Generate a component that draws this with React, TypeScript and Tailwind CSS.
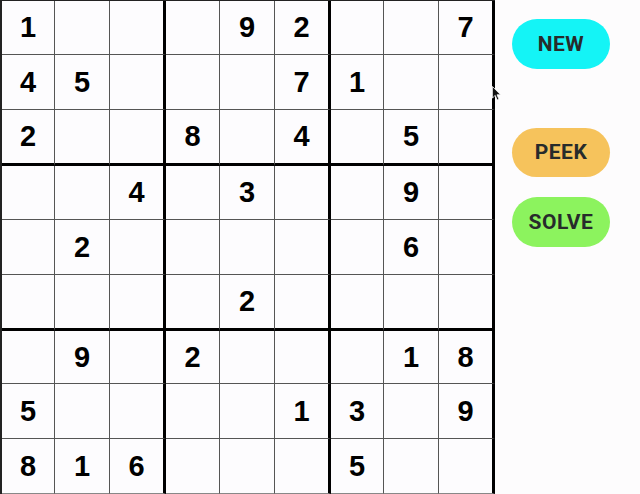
import React from "react";

const board: (number | null)[][] = [
  [1, null, null, null, 9, 2, null, null, 7],
  [4, 5, null, null, null, 7, 1, null, null],
  [2, null, null, 8, null, 4, null, 5, null],
  [null, null, 4, null, 3, null, null, 9, null],
  [null, 2, null, null, null, null, null, 6, null],
  [null, null, null, null, 2, null, null, null, null],
  [null, 9, null, 2, null, null, null, 1, 8],
  [5, null, null, null, null, 1, 3, null, 9],
  [8, 1, 6, null, null, null, 5, null, null],
];

const colClass = [
  "w-[53px] border-r border-r-[#555]",
  "w-[55px] border-r border-r-[#555]",
  "w-[56px] border-r-[3px] border-r-black",
  "w-[54px] border-r border-r-[#555]",
  "w-[55px] border-r border-r-[#555]",
  "w-[56px] border-r-[3px] border-r-black",
  "w-[53px] border-r border-r-[#555]",
  "w-[55px] border-r border-r-[#555]",
  "w-[56px] border-r-[3px] border-r-black",
];

const rowClass = [
  "h-[54px] border-b border-b-[#555]",
  "h-[55px] border-b border-b-[#555]",
  "h-[56px] border-b-[3px] border-b-black",
  "h-[54px] border-b border-b-[#555]",
  "h-[55px] border-b border-b-[#555]",
  "h-[56px] border-b-[3px] border-b-black",
  "h-[53px] border-b border-b-[#555]",
  "h-[55px] border-b border-b-[#555]",
  "h-[55px] border-b border-b-[#888]",
];

export default function App() {
  return (
    <div className="relative w-[640px] h-[494px] overflow-hidden bg-[#fdfcfd] flex">
      <div className="border-l-2 border-t border-l-[#222] border-t-[#222] flex flex-col self-start">
        {board.map((row, r) => (
          <div key={r} className="flex">
            {row.map((v, c) => (
              <div
                key={c}
                className={`${colClass[c]} ${rowClass[r]} flex items-center justify-center bg-[#fdfcfe] text-black font-bold text-[29px] leading-none font-['Liberation_Sans',Arial,sans-serif]`}
              >
                {v ?? ""}
              </div>
            ))}
          </div>
        ))}
      </div>
      <div className="ml-[17px] pt-[19px] flex flex-col">
        <button className="w-[98px] h-[50px] rounded-full bg-[#14f4f6] text-[#272b2b] font-bold text-[21px] leading-none font-['Roboto',sans-serif] tracking-[0.5px]">
          NEW
        </button>
        <button className="mt-[59px] w-[98px] h-[49px] rounded-full bg-[#f6c35c] text-[#272b2b] font-bold text-[21px] leading-none font-['Roboto',sans-serif] tracking-[0.5px]">
          PEEK
        </button>
        <button className="mt-[20px] w-[98px] h-[50px] rounded-full bg-[#8cf35e] text-[#272b2b] font-bold text-[21px] leading-none font-['Roboto',sans-serif] tracking-[0.5px]">
          SOLVE
        </button>
      </div>
      <svg className="absolute left-[492px] top-[86px]" width="10" height="15" viewBox="0 0 10 15">
        <path d="M0.5 0.5 L0.5 12 L3.2 9.4 L5.2 14 L7 13.2 L5 8.8 L8.6 8.8 Z" fill="#111" stroke="#fff" strokeWidth="0.8" />
      </svg>
    </div>
  );
}
